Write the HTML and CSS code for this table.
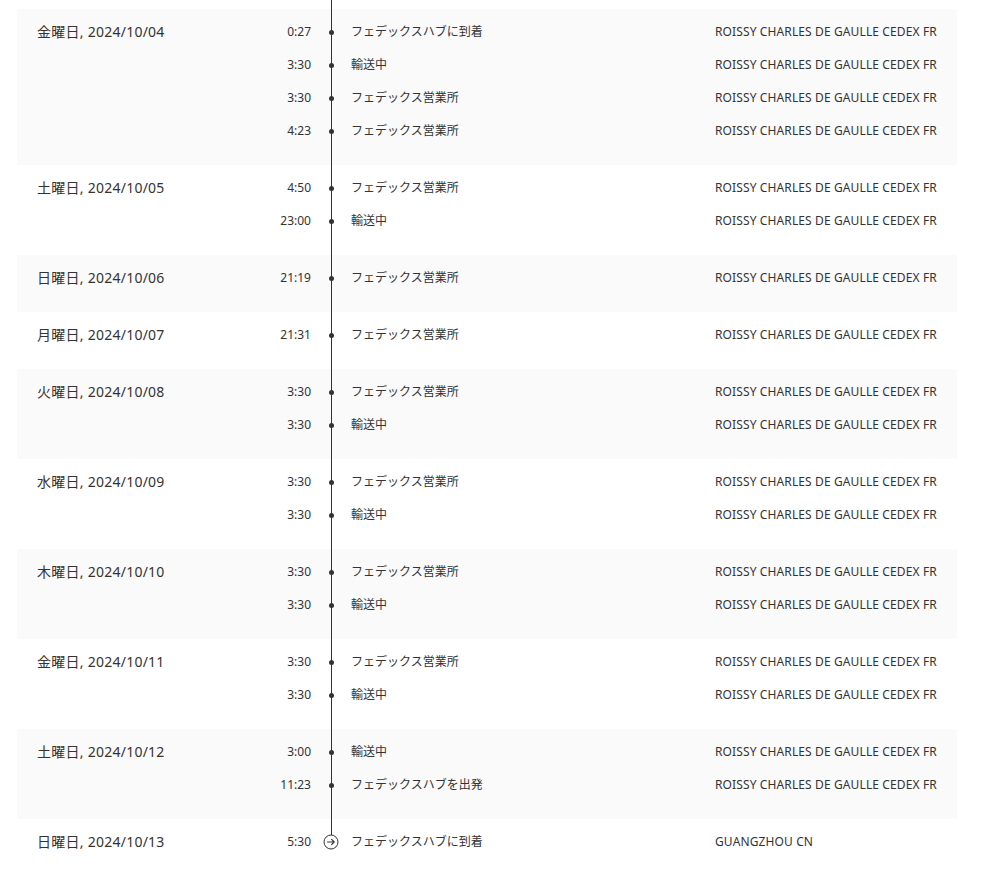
FILE: index.html
```html
<!DOCTYPE html>
<html lang="ja">
<head>
<meta charset="utf-8">
<title>配送履歴</title>
<link rel="stylesheet" href="styles.css">
</head>
<body>
<div class="timeline">
  <section class="day alt">
    <div class="date">金曜日, 2024/10/04</div>
    <ul class="events">
      <li class="event"><span class="time">0:27</span><span class="mark"><span class="dot"></span></span><span class="desc">フェデックスハブに到着</span><span class="loc">ROISSY CHARLES DE GAULLE CEDEX FR</span></li>
      <li class="event"><span class="time">3:30</span><span class="mark"><span class="dot"></span></span><span class="desc">輸送中</span><span class="loc">ROISSY CHARLES DE GAULLE CEDEX FR</span></li>
      <li class="event"><span class="time">3:30</span><span class="mark"><span class="dot"></span></span><span class="desc">フェデックス営業所</span><span class="loc">ROISSY CHARLES DE GAULLE CEDEX FR</span></li>
      <li class="event"><span class="time">4:23</span><span class="mark"><span class="dot"></span></span><span class="desc">フェデックス営業所</span><span class="loc">ROISSY CHARLES DE GAULLE CEDEX FR</span></li>
    </ul>
  </section>
  <section class="day">
    <div class="date">土曜日, 2024/10/05</div>
    <ul class="events">
      <li class="event"><span class="time">4:50</span><span class="mark"><span class="dot"></span></span><span class="desc">フェデックス営業所</span><span class="loc">ROISSY CHARLES DE GAULLE CEDEX FR</span></li>
      <li class="event"><span class="time">23:00</span><span class="mark"><span class="dot"></span></span><span class="desc">輸送中</span><span class="loc">ROISSY CHARLES DE GAULLE CEDEX FR</span></li>
    </ul>
  </section>
  <section class="day alt">
    <div class="date">日曜日, 2024/10/06</div>
    <ul class="events">
      <li class="event"><span class="time">21:19</span><span class="mark"><span class="dot"></span></span><span class="desc">フェデックス営業所</span><span class="loc">ROISSY CHARLES DE GAULLE CEDEX FR</span></li>
    </ul>
  </section>
  <section class="day">
    <div class="date">月曜日, 2024/10/07</div>
    <ul class="events">
      <li class="event"><span class="time">21:31</span><span class="mark"><span class="dot"></span></span><span class="desc">フェデックス営業所</span><span class="loc">ROISSY CHARLES DE GAULLE CEDEX FR</span></li>
    </ul>
  </section>
  <section class="day alt">
    <div class="date">火曜日, 2024/10/08</div>
    <ul class="events">
      <li class="event"><span class="time">3:30</span><span class="mark"><span class="dot"></span></span><span class="desc">フェデックス営業所</span><span class="loc">ROISSY CHARLES DE GAULLE CEDEX FR</span></li>
      <li class="event"><span class="time">3:30</span><span class="mark"><span class="dot"></span></span><span class="desc">輸送中</span><span class="loc">ROISSY CHARLES DE GAULLE CEDEX FR</span></li>
    </ul>
  </section>
  <section class="day">
    <div class="date">水曜日, 2024/10/09</div>
    <ul class="events">
      <li class="event"><span class="time">3:30</span><span class="mark"><span class="dot"></span></span><span class="desc">フェデックス営業所</span><span class="loc">ROISSY CHARLES DE GAULLE CEDEX FR</span></li>
      <li class="event"><span class="time">3:30</span><span class="mark"><span class="dot"></span></span><span class="desc">輸送中</span><span class="loc">ROISSY CHARLES DE GAULLE CEDEX FR</span></li>
    </ul>
  </section>
  <section class="day alt">
    <div class="date">木曜日, 2024/10/10</div>
    <ul class="events">
      <li class="event"><span class="time">3:30</span><span class="mark"><span class="dot"></span></span><span class="desc">フェデックス営業所</span><span class="loc">ROISSY CHARLES DE GAULLE CEDEX FR</span></li>
      <li class="event"><span class="time">3:30</span><span class="mark"><span class="dot"></span></span><span class="desc">輸送中</span><span class="loc">ROISSY CHARLES DE GAULLE CEDEX FR</span></li>
    </ul>
  </section>
  <section class="day">
    <div class="date">金曜日, 2024/10/11</div>
    <ul class="events">
      <li class="event"><span class="time">3:30</span><span class="mark"><span class="dot"></span></span><span class="desc">フェデックス営業所</span><span class="loc">ROISSY CHARLES DE GAULLE CEDEX FR</span></li>
      <li class="event"><span class="time">3:30</span><span class="mark"><span class="dot"></span></span><span class="desc">輸送中</span><span class="loc">ROISSY CHARLES DE GAULLE CEDEX FR</span></li>
    </ul>
  </section>
  <section class="day alt">
    <div class="date">土曜日, 2024/10/12</div>
    <ul class="events">
      <li class="event"><span class="time">3:00</span><span class="mark"><span class="dot"></span></span><span class="desc">輸送中</span><span class="loc">ROISSY CHARLES DE GAULLE CEDEX FR</span></li>
      <li class="event"><span class="time">11:23</span><span class="mark"><span class="dot"></span></span><span class="desc">フェデックスハブを出発</span><span class="loc">ROISSY CHARLES DE GAULLE CEDEX FR</span></li>
    </ul>
  </section>
  <section class="day last">
    <div class="date">日曜日, 2024/10/13</div>
    <ul class="events">
      <li class="event"><span class="time">5:30</span><span class="mark"><svg class="arrive" width="16" height="16" viewBox="0 0 16 16"><circle cx="8" cy="8" r="7" fill="#fff" stroke="#333" stroke-width="1"/><path d="M4.5 8H11.2M8.6 5.4L11.2 8L8.6 10.6" fill="none" stroke="#333" stroke-width="1.1" stroke-linecap="round" stroke-linejoin="round"/></svg></span><span class="desc">フェデックスハブに到着</span><span class="loc">GUANGZHOU CN</span></li>
    </ul>
  </section>
</div>
</body>
</html>
```
FILE: styles.css
```css
* {
  box-sizing: border-box;
}

html, body {
  margin: 0;
  padding: 0;
  background: #fff;
}

body {
  font-family: "Noto Sans", "Noto Sans CJK JP", sans-serif;
  color: #333;
}

.timeline {
  position: relative;
  padding: 9px 31px 0 17px;
}

.timeline::before {
  content: "";
  position: absolute;
  left: 331px;
  top: 0;
  bottom: 40px;
  width: 1px;
  background: #333;
  z-index: 0;
}

.day {
  display: flex;
  padding: 12px 20px 12px 20px;
  background: #fff;
}

.day.alt {
  background: #fafafa;
}

.date {
  width: 214px;
  flex: none;
  font-size: 14px;
  line-height: 22px;
  letter-spacing: 0.25px;
  white-space: nowrap;
}

.events {
  list-style: none;
  margin: 0;
  padding: 0;
  flex: 1;
}

.event {
  display: flex;
  align-items: center;
  height: 22px;
  margin-bottom: 11px;
  font-size: 12px;
  line-height: 22px;
}

.time {
  width: 60px;
  text-align: right;
  flex: none;
}

.mark {
  width: 40px;
  flex: none;
  display: flex;
  justify-content: center;
  align-items: center;
  position: relative;
  z-index: 1;
}

.dot {
  width: 5px;
  height: 5px;
  border-radius: 50%;
  background: #333;
}

.arrive {
  display: block;
}

.desc {
  width: 364px;
  flex: none;
  white-space: nowrap;
}

.loc {
  flex: 1;
  white-space: nowrap;
  letter-spacing: 0.12px;
}
```
